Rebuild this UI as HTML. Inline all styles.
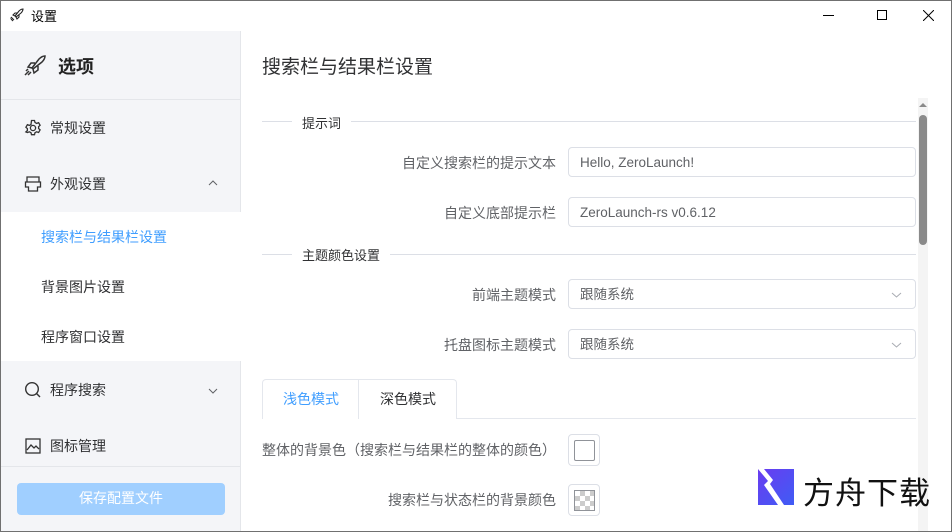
<!DOCTYPE html>
<html><head><meta charset="utf-8"><style>
*{margin:0;padding:0;box-sizing:border-box}
body{width:952px;height:532px;overflow:hidden;background:#fff;font-family:"Liberation Sans","Noto Sans CJK SC",sans-serif;color:#303133;position:relative}
.frame{position:absolute;inset:0;border:1px solid #707070;pointer-events:none;z-index:9}
.a{position:absolute}
.side{left:1px;top:31px;width:240px;height:500px;background:#f4f5f8;border-right:1px solid #e4e6ea}
.t{font-size:14px;white-space:nowrap}
.lab{font-size:14px;color:#606266;text-align:right;white-space:nowrap}
.inp{border:1px solid #dcdfe6;border-radius:4px;background:#fff;font-size:13.5px;color:#606266;padding-left:11px;line-height:30px;height:30px}
</style></head><body>
<div class="frame"></div>
<svg class="a" style="left:9px;top:7px" width="16" height="16" viewBox="0 0 16 16" fill="none" stroke="#222" stroke-width="1.1"><path d="M6 9 L10 4 Q12 2 14 2 Q14 4 12 6 L7 10 Z M6 9 L4 8 L6 6 L8 6 M7 10 L8 12 L10 10 L10 8 M4 11 L2 13 M5 12 L3 14 M3 10 L1.5 11.5"/></svg>
<div class="a t" style="left:31px;top:6px;font-size:13px;color:#000">设置</div>
<div class="a" style="left:823px;top:15px;width:11px;height:1px;background:#000"></div>
<div class="a" style="left:877px;top:10px;width:10px;height:10px;border:1px solid #000"></div>
<svg class="a" style="left:923px;top:10px" width="11" height="11"><path d="M0 0L11 11M11 0L0 11" stroke="#000" stroke-width="1"/></svg>
<div class="a side"></div>
<div class="a" style="left:1px;top:99px;width:240px;height:1px;background:#e4e6ea"></div>
<svg class="a" style="left:23px;top:54px" width="24" height="24" viewBox="0 0 24 24" fill="none" stroke="#333" stroke-width="1.5"><path d="M9 14 L16 5 Q19 2 22 2 Q22 5 19 8 L10 15 Z M9 14 L5 13 L8 9 L12 9 M10 15 L11 19 L15 16 L15 12 M6 17 L2 21 M8 18 L5 21 M5 15 L3 17"/></svg>
<div class="a" style="left:58px;top:53px;font-size:18px;font-weight:bold;color:#222">选项</div>
<svg class="a" style="left:24px;top:119px" width="18" height="18" viewBox="0 0 18 18" fill="none" stroke="#333" stroke-width="1.3"><circle cx="9" cy="9" r="2.6"/><path d="M7.5 1.5h3l.5 2 1.6.9 2-.7 1.5 2.6-1.5 1.4v1.8l1.5 1.4-1.5 2.6-2-.7-1.6.9-.5 2h-3l-.5-2-1.6-.9-2 .7L1.9 12.9l1.5-1.4V9.7L1.9 8.3 3.4 5.7l2 .7L7 5.5z"/></svg>
<div class="a t" style="left:50px;top:118px">常规设置</div>
<svg class="a" style="left:24px;top:175px" width="18" height="18" viewBox="0 0 18 18" fill="none" stroke="#333" stroke-width="1.3"><path d="M3 2h12v5H3zM1.5 7h15v5h-3v4h-9v-4h-3z"/></svg>
<div class="a t" style="left:50px;top:174px">外观设置</div>
<svg class="a" style="left:208px;top:180px" width="10" height="6"><path d="M1 5L5 1L9 5" stroke="#606266" fill="none"/></svg>
<div class="a" style="left:1px;top:212px;width:240px;height:149px;background:#fff"></div>
<div class="a t" style="left:41px;top:227px;color:#409eff">搜索栏与结果栏设置</div>
<div class="a t" style="left:41px;top:277px">背景图片设置</div>
<div class="a t" style="left:41px;top:327px">程序窗口设置</div>
<svg class="a" style="left:24px;top:381px" width="18" height="18" viewBox="0 0 18 18" fill="none" stroke="#333" stroke-width="1.4"><circle cx="8" cy="8" r="6.3"/><path d="M12.5 12.5L16 16"/></svg>
<div class="a t" style="left:50px;top:380px">程序搜索</div>
<svg class="a" style="left:208px;top:388px" width="10" height="6"><path d="M1 1L5 5L9 1" stroke="#606266" fill="none"/></svg>
<svg class="a" style="left:25px;top:438px" width="16" height="16" viewBox="0 0 16 16" fill="none" stroke="#333" stroke-width="1.3"><rect x="1" y="1" width="14" height="14"/><path d="M2 12l4-5 3 3 2-2 3 3"/></svg>
<div class="a t" style="left:50px;top:436px">图标管理</div>
<div class="a" style="left:1px;top:466px;width:240px;height:1px;background:#e4e6ea"></div>
<div class="a" style="left:17px;top:483px;width:208px;height:32px;background:#a0cfff;border-radius:4px;color:#fff;font-size:14px;text-align:center;line-height:31px">保存配置文件</div>
<div class="a" style="left:262px;top:52px;font-size:19px;color:#303133">搜索栏与结果栏设置</div>
<div class="a" style="left:262px;top:121px;width:654px;height:1px;background:#dcdfe6"></div>
<div class="a" style="left:292px;top:113px;background:#fff;padding:0 10px;font-size:13px">提示词</div>
<div class="a lab" style="right:396px;top:153px">自定义搜索栏的提示文本</div>
<div class="a inp" style="left:568px;top:147px;width:348px">Hello, ZeroLaunch!</div>
<div class="a lab" style="right:396px;top:203px">自定义底部提示栏</div>
<div class="a inp" style="left:568px;top:197px;width:348px">ZeroLaunch-rs v0.6.12</div>
<div class="a" style="left:262px;top:254px;width:654px;height:1px;background:#dcdfe6"></div>
<div class="a" style="left:292px;top:245px;background:#fff;padding:0 10px;font-size:13px">主题颜色设置</div>
<div class="a lab" style="right:396px;top:285px">前端主题模式</div>
<div class="a inp" style="left:568px;top:279px;width:348px">跟随系统</div>
<svg class="a" style="left:891px;top:292px" width="11" height="6"><path d="M1 1L5.5 5L10 1" stroke="#a8abb2" fill="none"/></svg>
<div class="a lab" style="right:396px;top:335px">托盘图标主题模式</div>
<div class="a inp" style="left:568px;top:329px;width:348px">跟随系统</div>
<svg class="a" style="left:891px;top:342px" width="11" height="6"><path d="M1 1L5.5 5L10 1" stroke="#a8abb2" fill="none"/></svg>
<div class="a" style="left:262px;top:418px;width:654px;height:1px;background:#e4e7ed"></div>
<div class="a" style="left:262px;top:379px;width:195px;height:40px;border:1px solid #e4e7ed;border-bottom:none;border-radius:4px 4px 0 0;background:#fff"></div>
<div class="a" style="left:358px;top:380px;width:1px;height:39px;background:#e4e7ed"></div>
<div class="a t" style="left:283px;top:389px;color:#409eff">浅色模式</div>
<div class="a t" style="left:380px;top:389px">深色模式</div>
<div class="a lab" style="left:262px;top:440px;text-align:left">整体的背景色（搜索栏与结果栏的整体的颜色）</div>
<div class="a" style="left:568px;top:434px;width:32px;height:32px;border:1px solid #dcdfe6;border-radius:4px;background:#fff"></div>
<div class="a" style="left:574px;top:440px;width:21px;height:21px;border:1px solid #909399;border-radius:2px"></div>
<div class="a lab" style="right:396px;top:490px">搜索栏与状态栏的背景颜色</div>
<div class="a" style="left:568px;top:484px;width:32px;height:32px;border:1px solid #dcdfe6;border-radius:4px;background:#fff"></div>
<div class="a" style="left:574px;top:490px;width:21px;height:21px;border:1px solid #909399;background:repeating-conic-gradient(#ccc 0 25%,#fff 0 50%) 0 0/10px 10px"></div>
<div class="a" style="left:918px;top:98px;width:10px;height:434px;background:#f4f4f4"></div>
<svg class="a" style="left:919px;top:102px" width="8" height="6"><path d="M0 5L4 1L8 5Z" fill="#8a8a8a"/></svg>
<div class="a" style="left:919px;top:115px;width:8px;height:130px;background:#8a8a8a;border-radius:4px"></div>
<div class="a" style="left:758px;top:469px;width:36px;height:36px;background:linear-gradient(135deg,#6a3cf0,#3f5cf5)"></div>
<svg class="a" style="left:758px;top:469px" width="36" height="36"><path d="M0 0L6 0L15 11L12 15L26 36L20 36L6 16L10 12Z" fill="#fff"/></svg>
<div class="a" style="left:803px;top:468px;font-size:31px;color:#111;letter-spacing:1px;font-family:'Noto Sans CJK SC',sans-serif">方舟下载</div>
</body></html>
